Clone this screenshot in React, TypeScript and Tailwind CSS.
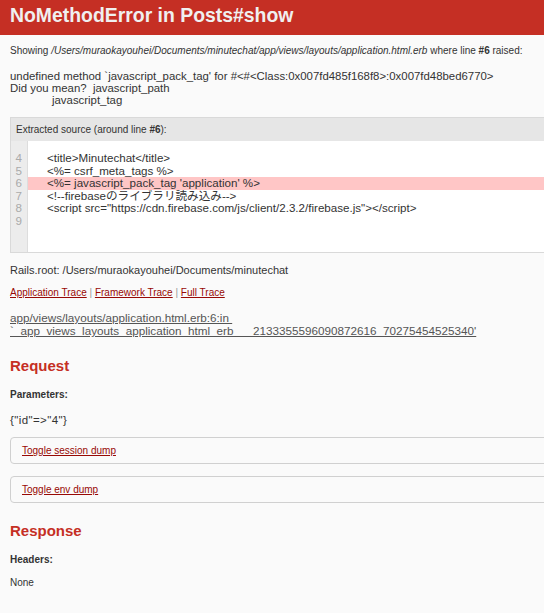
import React from 'react';

const codeLines = [
  { n: 4, text: '<title>Minutechat</title>' },
  { n: 5, text: '<%= csrf_meta_tags %>' },
  { n: 6, text: "<%= javascript_pack_tag 'application' %>", active: true },
  { n: 7, text: '<!--firebaseのライブラリ読み込み-->' },
  { n: 8, text: '<script src="https://cdn.firebase.com/js/client/2.3.2/firebase.js"></script>' },
  { n: 9, text: '' },
];

export default function App() {
  return (
    <div className="h-screen overflow-hidden bg-[#FAFAFA] text-[#333] font-['Helvetica','Liberation_Sans','Noto_Sans_CJK_JP',Arial,sans-serif]">
      {/* Header */}
      <header className="h-[35px] bg-[#C52F24] px-[10px]">
        <h1 className="text-[19.4px] font-bold leading-[30px] text-[#F0F0F0]">NoMethodError in Posts#show</h1>
      </header>

      <div className="px-[10px]">
        <p className="mt-[10px] text-[10px] leading-[12px]">
          Showing <i>/Users/muraokayouhei/Documents/minutechat/app/views/layouts/application.html.erb</i> where line{' '}
          <b>#6</b> raised:
        </p>

        <div className="mt-[12.5px] text-[11.4px] leading-[12px] whitespace-nowrap">
          <div>undefined method `javascript_pack_tag' for #&lt;#&lt;Class:0x007fd485f168f8&gt;:0x007fd48bed6770&gt;</div>
          <div>Did you mean?&nbsp; javascript_path</div>
          <div className="pl-[42px]">javascript_tag</div>
        </div>

        {/* Extracted source */}
        <div className="mt-[11.5px] w-[978px] border border-[#D9D9D9] bg-[#E6E6E6]">
          <div className="h-[23px] pl-[5px] text-[10px] leading-[23px]">
            Extracted source (around line <b>#6</b>):
          </div>
          <div className="flex h-[111px] bg-white text-[11.6px]">
            <div className="w-[17px] shrink-0 border-r border-[#DDD] bg-[#ECECEC] pt-[11px] pr-[5px] text-right text-[#AAA]">
              {codeLines.map((l) => (
                <div key={l.n} className="h-[12.5px] leading-[12.5px]">
                  {l.n}
                </div>
              ))}
            </div>
            <div className="flex-1 pt-[11px]">
              {codeLines.map((l) => (
                <div
                  key={l.n}
                  className={`h-[12.5px] whitespace-pre pl-[19px] leading-[12.5px] ${l.active ? 'bg-[#FFC6C6]' : ''}`}
                >
                  {l.text}
                </div>
              ))}
            </div>
          </div>
        </div>

        <p className="mt-[11px] text-[11px] leading-[12px]">Rails.root: /Users/muraokayouhei/Documents/minutechat</p>

        <p className="mt-[10.5px] text-[10px] leading-[12px]">
          <a className="text-[#980905] underline">Application Trace</a> <span className="text-[#999]">|</span>{' '}
          <a className="text-[#980905] underline">Framework Trace</a> <span className="text-[#999]">|</span>{' '}
          <a className="text-[#980905] underline">Full Trace</a>
        </p>

        <div className="mt-[12.5px] text-[11.7px] leading-[13px] text-[#555] whitespace-pre">
          <a className="underline">
            {'app/views/layouts/application.html.erb:6:in \n'}
            {"`_app_views_layouts_application_html_erb___2133355596090872616_70275454525340'"}
          </a>
        </div>

        {/* Request */}
        <h2 className="mt-[19.5px] text-[15px] font-bold leading-[18px] text-[#C52F24]">Request</h2>
        <p className="mt-[14.5px] text-[10px] font-bold leading-[12px]">Parameters:</p>
        <p className="mt-[12.5px] text-[11.5px] tracking-[0.4px] leading-[12px]">{'{"id"=>"4"}'}</p>

        <div className="mt-[11.5px] flex h-[27px] w-[978px] items-center rounded-[4px] border border-[#D0D0D0] pl-[11px]">
          <a className="text-[10px] text-[#980905] underline">Toggle session dump</a>
        </div>
        <div className="mt-[11.5px] flex h-[27px] w-[978px] items-center rounded-[4px] border border-[#D0D0D0] pl-[11px]">
          <a className="text-[10px] text-[#980905] underline">Toggle env dump</a>
        </div>

        {/* Response */}
        <h2 className="mt-[19px] text-[15px] font-bold leading-[18px] text-[#C52F24]">Response</h2>
        <p className="mt-[14px] text-[10px] font-bold leading-[12px]">Headers:</p>
        <p className="mt-[11.5px] text-[10px] leading-[12px]">None</p>
      </div>
    </div>
  );
}
